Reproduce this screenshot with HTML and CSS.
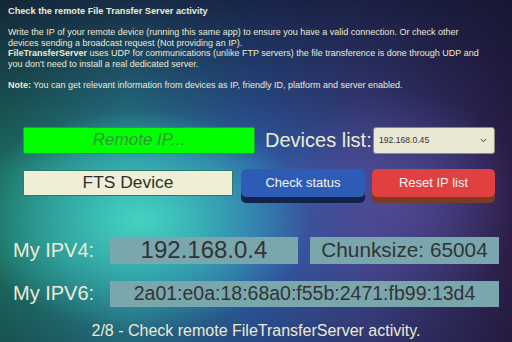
FILE: index.html
```html
<!DOCTYPE html>
<html>
<head>
<meta charset="utf-8">
<link rel="stylesheet" href="styles.css">
</head>
<body>
<div class="screen">
  <div class="intro">
    <div class="title">Check the remote File Transfer Server activity</div>
    <div class="blank"></div>
    <div>Write the IP of your remote device (running this same app) to ensure you have a valid connection. Or check other</div>
    <div>devices sending a broadcast request (Not providing an IP).</div>
    <div><b>FileTransferServer</b> uses UDP for communications (unlike FTP servers) the file transference is done through UDP and</div>
    <div>you don't need to install a real dedicated server.</div>
    <div class="blank"></div>
    <div><b>Note:</b> You can get relevant information from devices as IP, friendly ID, platform and server enabled.</div>
  </div>

  <div class="controls">
    <div class="row row-top">
      <div class="ip-input">Remote IP...</div>
      <div class="devices-label">Devices list:</div>
      <div class="select">
        <span>192.168.0.45</span>
        <svg class="chev" width="7" height="5" viewBox="0 0 7 5"><polyline points="0.8,1 3.5,3.8 6.2,1" fill="none" stroke="#444" stroke-width="1"/></svg>
      </div>
    </div>
    <div class="row row-buttons">
      <div class="device-name">FTS Device</div>
      <div class="btn btn-blue">Check status</div>
      <div class="btn btn-red">Reset IP list</div>
    </div>
  </div>

  <div class="info">
    <div class="info-row">
      <div class="info-label">My IPV4:</div>
      <div class="info-box ipv4">192.168.0.4</div>
      <div class="info-box chunk">Chunksize: 65004</div>
    </div>
    <div class="info-row row-ipv6">
      <div class="info-label">My IPV6:</div>
      <div class="info-box ipv6">2a01:e0a:18:68a0:f55b:2471:fb99:13d4</div>
    </div>
  </div>

  <div class="footer">2/8 - Check remote FileTransferServer activity.</div>
</div>
</body>
</html>
```

FILE: styles.css
```css
html, body {
  margin: 0;
  padding: 0;
}
body {
  width: 512px;
  height: 342px;
  overflow: hidden;
  font-family: "Liberation Sans", Arial, sans-serif;
}
.screen {
  width: 512px;
  height: 342px;
  overflow: hidden;
  color: #ecebd6;
  background:
    radial-gradient(ellipse 170px 110px at 140px 220px, rgba(70, 215, 195, 0.95) 0%, rgba(60, 200, 190, 0.6) 45%, rgba(60, 190, 190, 0) 100%),
    radial-gradient(ellipse 120px 110px at 400px 200px, rgba(90, 80, 160, 0.6) 0%, rgba(90, 80, 160, 0) 100%),
    linear-gradient(to bottom, rgba(18, 22, 48, 0.8) 0%, rgba(18, 22, 48, 0.35) 30%, rgba(18, 22, 48, 0) 50%, rgba(18, 22, 48, 0) 75%, rgba(18, 22, 48, 0.3) 100%),
    linear-gradient(to right, #1b6c5c 0%, #2a8a9a 25%, #2f5ea8 50%, #40448a 72%, #2c1c46 100%);
}
.intro {
  padding: 6px 0 0 8px;
  font-size: 9px;
  line-height: 10.6px;
  white-space: nowrap;
}
.intro .title {
  font-weight: bold;
  font-size: 9.2px;
}
.intro .blank {
  height: 10.6px;
}
.controls {
  margin-top: 36px;
  padding-left: 23px;
}
.row {
  display: flex;
  align-items: center;
}
.ip-input {
  flex-shrink: 0;
  width: 230px;
  height: 25px;
  background: #00ff00;
  border: 1px solid #2a9a3a;
  border-radius: 2px;
  color: #36963a;
  font-style: italic;
  font-size: 17px;
  display: flex;
  align-items: center;
  justify-content: center;
}
.devices-label {
  flex-shrink: 0;
  margin-left: 10px;
  width: 106px;
  font-size: 20px;
  white-space: nowrap;
  color: #ecebd6;
}
.select {
  flex-shrink: 0;
  margin-left: 2px;
  height: 25px;
  background: #e9e8d2;
  border: 1px solid #8a8a80;
  border-radius: 3px;
  display: flex;
  align-items: center;
  justify-content: space-between;
  padding: 0 7px 0 5px;
  box-sizing: content-box;
  width: 108px;
  color: #333;
  font-size: 8.6px;
}
.row-buttons {
  margin-top: 15px;
  align-items: flex-start;
}
.device-name {
  flex-shrink: 0;
  margin-top: 1px;
  width: 208px;
  height: 24px;
  background: #efefd7;
  border: 1px solid #2f7a6a;
  border-radius: 1px;
  color: #2e2e2e;
  font-size: 17.4px;
  display: flex;
  align-items: center;
  justify-content: center;
}
.btn {
  flex-shrink: 0;
  width: 123px;
  height: 28px;
  border-radius: 5px;
  display: flex;
  align-items: center;
  justify-content: center;
  font-size: 13px;
  color: #f4f4f4;
}
.btn-blue {
  margin-left: 8px;
  width: 124px;
  background: #2c5cb5;
  box-shadow: 0 6px 0 #10244a;
}
.btn-red {
  margin-left: 7px;
  background: #e14040;
  box-shadow: 0 6px 0 #7a3a24;
}
.info {
  margin-top: 40px;
  padding-left: 13px;
}
.info-row {
  display: flex;
  align-items: center;
}
.row-ipv6 {
  margin-top: 17px;
}
.info-label {
  flex-shrink: 0;
  width: 97px;
  font-size: 20px;
  white-space: nowrap;
  color: #ecebd6;
}
.info-box {
  flex-shrink: 0;
  height: 27px;
  background: #7aa7ad;
  color: #333;
  display: flex;
  align-items: center;
  justify-content: center;
  white-space: nowrap;
}
.ipv4 {
  width: 188px;
  font-size: 24px;
}
.chunk {
  margin-left: 12px;
  width: 189px;
  font-size: 20.8px;
}
.ipv6 {
  width: 389px;
  height: 26px;
  font-size: 19.5px;
}
.footer {
  margin-top: 15px;
  text-align: center;
  font-size: 16px;
  line-height: 18px;
  white-space: nowrap;
  color: #ecebd6;
}
```
